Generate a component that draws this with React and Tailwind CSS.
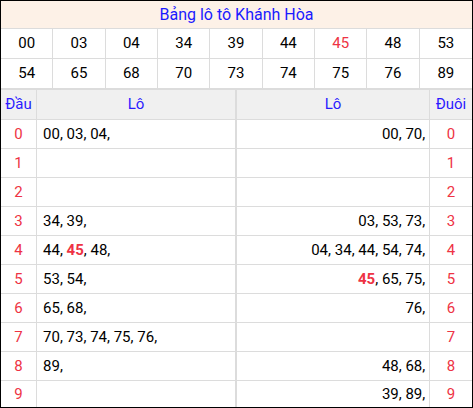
import React from "react";

const nums = ["00", "03", "04", "34", "39", "44", "45", "48", "53", "54", "65", "68", "70", "73", "74", "75", "76", "89"];
const special = "45";

// rows: [dau list, duoi list]
const rows = [
  [["00", "03", "04"], ["00", "70"]],
  [[], []],
  [[], []],
  [["34", "39"], ["03", "53", "73"]],
  [["44", "45", "48"], ["04", "34", "44", "54", "74"]],
  [["53", "54"], ["45", "65", "75"]],
  [["65", "68"], ["76"]],
  [["70", "73", "74", "75", "76"], []],
  [["89"], ["48", "68"]],
  [[], ["39", "89"]],
];

function List({ items }) {
  return (
    <>
      {items.map((n, i) => (
        <span key={i}>
          {n === special ? <b className="font-bold text-[#ee3344]">{n}</b> : n}
          {", "}
        </span>
      ))}
    </>
  );
}

export default function App() {
  return (
    <div className="w-[473px] border border-black bg-white font-['Roboto',sans-serif] text-[15px] text-black">
      <div className="h-[28px] border-b border-[#dcdcdc] bg-[#fdf1e7] flex items-center justify-center text-[16px] text-[#1a1aff]">
        Bảng lô tô Khánh Hòa
      </div>
      <div className="grid grid-cols-9">
        {nums.map((n, i) => (
          <div
            key={i}
            className={`h-[30px] flex items-center justify-center border-b border-[#dcdcdc] ${
              i % 9 !== 8 ? "border-r" : ""
            } ${n === special ? "text-[#ee3344]" : ""}`}
          >
            {n}
          </div>
        ))}
      </div>
      <div className="grid grid-cols-[36px_200px_193px_42px] border-t border-[#dcdcdc]">
        <div className="h-[30px] bg-[#f0f0f0] border-r border-b border-[#dcdcdc] flex items-center justify-center text-[#2a1aff]">
          Đầu
        </div>
        <div className="h-[30px] bg-[#f0f0f0] border-r-2 border-b border-[#dcdcdc] flex items-center justify-center text-[#2a1aff]">
          Lô
        </div>
        <div className="h-[30px] bg-[#f0f0f0] border-r border-b border-[#dcdcdc] flex items-center justify-center text-[#2a1aff]">
          Lô
        </div>
        <div className="h-[30px] bg-[#f0f0f0] border-b border-[#dcdcdc] flex items-center justify-center text-[#2a1aff]">
          Đuôi
        </div>
        {rows.map(([left, right], i) => {
          const last = i === rows.length - 1;
          const h = last ? "h-[26px]" : "h-[29px] border-b";
          return (
            <React.Fragment key={i}>
              <div className={`${h} border-r border-[#dcdcdc] flex items-center justify-center text-[#ee3344]`}>{i}</div>
              <div className={`${h} border-r-2 border-[#dcdcdc] flex items-center pl-[6px] whitespace-pre`}>
                <List items={left} />
              </div>
              <div className={`${h} border-r border-[#dcdcdc] flex items-center justify-end pr-0 whitespace-pre`}>
                <List items={right} />
              </div>
              <div className={`${h} border-[#dcdcdc] flex items-center justify-center text-[#ee3344]`}>{i}</div>
            </React.Fragment>
          );
        })}
      </div>
    </div>
  );
}
